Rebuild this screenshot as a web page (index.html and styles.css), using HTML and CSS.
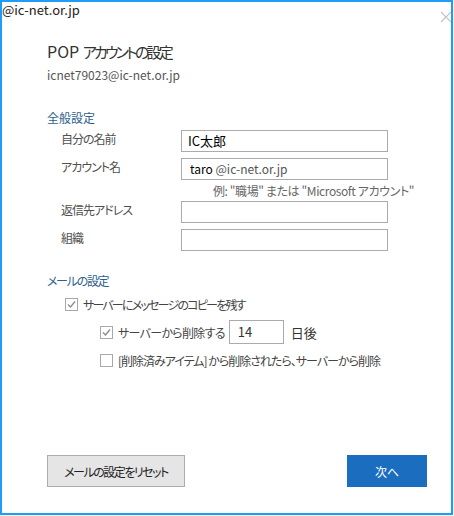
FILE: index.html
```html
<!DOCTYPE html>
<html lang="ja">
<head>
  <meta charset="UTF-8" />
  <meta name="viewport" content="width=device-width, initial-scale=1.0"/>
  <title>POP アカウントの設定</title>
  <link rel="stylesheet" href="styles.css">
</head>
<body>
  <div class="window">
    <!-- cropped caption of the parent window -->
    <div class="caption">@ic-net.or.jp</div>
    <svg class="close" width="12" height="12" viewBox="0 0 12 12">
      <path d="M1 1 L11 11 M11 1 L1 11" stroke="#c4c4c4" stroke-width="1.2" fill="none"/>
    </svg>

    <div class="content">
      <h1 class="title">POP <span class="jp">アカウントの設定</span></h1>
      <div class="subtitle">icnet79023@ic-net.or.jp</div>

      <div class="section">全般設定</div>
      <div class="form">
        <label class="label">自分の名前</label>
        <div class="field">IC太郎</div>

        <label class="label">アカウント名</label>
        <div class="field field-account"><span class="user">taro</span> <span class="domain">@ic-net.or.jp</span></div>

        <div class="hint">例: "職場" または "Microsoft アカウント"</div>

        <label class="label">返信先アドレス</label>
        <div class="field"></div>

        <label class="label">組織</label>
        <div class="field"></div>
      </div>

      <div class="section section-mail">メールの設定</div>
      <div class="options">
        <div class="option">
          <span class="check">
            <svg width="11" height="11" viewBox="0 0 11 11"><path d="M2 5.5 L4.5 8 L9 2.5" stroke="#8a8a8a" stroke-width="1.3" fill="none"/></svg>
          </span>
          <span class="tight">サーバーにメッセージのコピーを残す</span>
        </div>
        <div class="option sub">
          <span class="check">
            <svg width="11" height="11" viewBox="0 0 11 11"><path d="M2 5.5 L4.5 8 L9 2.5" stroke="#8a8a8a" stroke-width="1.3" fill="none"/></svg>
          </span>
          <span>サーバーから削除する</span>
          <div class="days">14</div>
          <span class="days-label">日後</span>
        </div>
        <div class="option sub">
          <span class="check"></span>
          <span class="loose">[削除済みアイテム] から削除されたら、サーバーから削除</span>
        </div>
      </div>

      <div class="footer">
        <button class="btn btn-reset">メールの設定をリセット</button>
        <button class="btn btn-next">次へ</button>
      </div>
    </div>
  </div>
</body>
</html>
```

FILE: styles.css
```css
* {
  box-sizing: border-box;
  margin: 0;
  padding: 0;
}

body {
  background: #ffffff;
  font-family: "Noto Sans CJK JP", "Lato", sans-serif;
  font-feature-settings: "palt" 1;
  font-size: 12px;
  color: #444;
}

.window {
  position: relative;
  width: 453px;
  height: 515px;
  border: 2px solid #1e9cf8;
  background: #fff;
  overflow: hidden;
}

.caption {
  position: absolute;
  left: -2px;
  top: -2px;
  padding: 2px 4px 2px 2px;
  background: #fff;
  font-size: 13px;
  line-height: 16px;
  color: #222;
}

.close {
  position: absolute;
  left: 438px;
  top: 9px;
}

.content {
  display: flex;
  flex-direction: column;
  height: 100%;
  padding: 38px 24px 26px 45px;
}

.title {
  font-size: 16px;
  font-weight: normal;
  line-height: 22px;
  color: #333;
}

.title .jp {
  font-size: 15px;
  letter-spacing: -2.8px;
}

.subtitle {
  margin-top: 3px;
  font-size: 12px;
  line-height: 18px;
  color: #555;
}

.section {
  margin-top: 25px;
  line-height: 18px;
  color: #2f5f8c;
}

.section-mail {
  margin-top: 21px;
  letter-spacing: -1.3px;
}

.form {
  display: grid;
  grid-template-columns: 120px 207px;
  row-gap: 6px;
  margin-top: 3px;
  padding-left: 14px;
}

.label {
  line-height: 18px;
  color: #505050;
  letter-spacing: -1px;
}

.field {
  height: 22px;
  border: 1px solid #ababab;
  padding: 0 6px;
  font-size: 13px;
  line-height: 20px;
  color: #000;
}

.field-account {
  padding-left: 8px;
  font-size: 12px;
}

.field-account .domain {
  color: #555;
}

.hint {
  grid-column: 2;
  margin: -3px 0;
  padding-left: 32px;
  line-height: 15px;
  color: #666;
  white-space: nowrap;
  letter-spacing: -0.4px;
}

.options {
  display: flex;
  flex-direction: column;
}

.option {
  display: flex;
  align-items: center;
  height: 28px;
  padding-left: 18px;
  gap: 5px;
  color: #444;
  white-space: nowrap;
  letter-spacing: -0.7px;
}

.option .tight {
  letter-spacing: -1.8px;
}

.option .loose {
  letter-spacing: -1px;
}

.option.sub {
  padding-left: 53px;
}

.check {
  flex: none;
  display: inline-flex;
  width: 13px;
  height: 13px;
  border: 1px solid #a8a8a8;
  background: #fff;
  align-items: center;
  justify-content: center;
}

.check svg {
  flex: none;
}

.days {
  width: 55px;
  height: 24px;
  margin-left: -1px;
  border: 1px solid #ababab;
  padding: 0 8px;
  font-size: 13px;
  line-height: 22px;
  color: #333;
  letter-spacing: 0;
}

.days-label {
  margin-left: 2px;
  font-size: 13px;
  color: #333;
  letter-spacing: 0;
}

.footer {
  display: flex;
  justify-content: space-between;
  margin-top: auto;
}

.btn {
  height: 32px;
  font-family: "Noto Sans CJK JP", "Lato", sans-serif;
  font-feature-settings: "palt" 1;
  font-size: 12px;
  cursor: pointer;
}

.btn-reset {
  width: 138px;
  background: #e5e5e5;
  border: 1px solid #adadad;
  color: #222;
  letter-spacing: -1.5px;
}

.btn-next {
  width: 80px;
  background: #1a6dbf;
  border: 1px solid #1a6dbf;
  color: #fff;
}
```
